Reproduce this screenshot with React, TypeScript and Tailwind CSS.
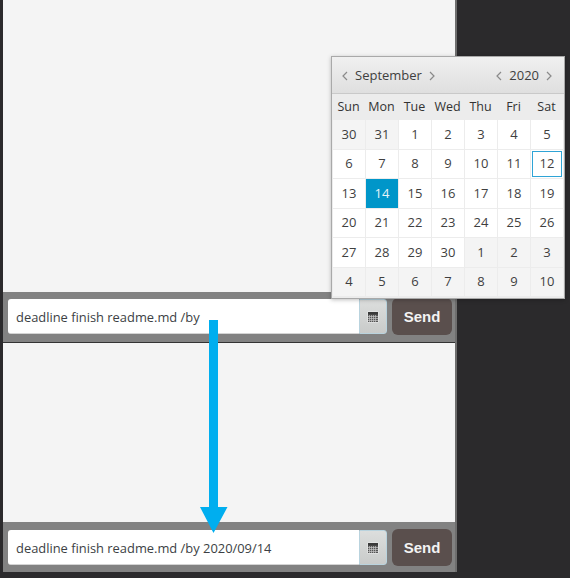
const days: { n: number; muted?: boolean; selected?: boolean; today?: boolean }[] = [
  { n: 30, muted: true }, { n: 31, muted: true }, { n: 1 }, { n: 2 }, { n: 3 }, { n: 4 }, { n: 5 },
  { n: 6 }, { n: 7 }, { n: 8 }, { n: 9 }, { n: 10 }, { n: 11 }, { n: 12, today: true },
  { n: 13 }, { n: 14, selected: true }, { n: 15 }, { n: 16 }, { n: 17 }, { n: 18 }, { n: 19 },
  { n: 20 }, { n: 21 }, { n: 22 }, { n: 23 }, { n: 24 }, { n: 25 }, { n: 26 },
  { n: 27 }, { n: 28 }, { n: 29 }, { n: 30 }, { n: 1, muted: true }, { n: 2, muted: true }, { n: 3, muted: true },
  { n: 4, muted: true }, { n: 5, muted: true }, { n: 6, muted: true }, { n: 7, muted: true }, { n: 8, muted: true }, { n: 9, muted: true }, { n: 10, muted: true },
];
const week = ["Sun", "Mon", "Tue", "Wed", "Thu", "Fri", "Sat"];

function CalIcon() {
  return (
    <svg width="12" height="12" viewBox="0 0 12 12" aria-hidden="true">
      <rect x="0.5" y="0.5" width="11" height="11" fill="#eeeeee" />
      <rect x="1" y="1" width="10" height="10" fill="#555555" />
      <rect x="1" y="1" width="10" height="2.5" fill="#3a3a3a" />
      <path d="M2.5 4v7M4.5 4v7M6.5 4v7M8.5 4v7M1 5.5h10M1 7.5h10M1 9.5h10" stroke="#c4c4c4" strokeWidth="0.7" />
    </svg>
  );
}

function Bar({ text, offset }: { text: string; offset: string }) {
  return (
    <div className={`h-[50px] bg-[#828282] flex items-start pl-[5px] ${offset}`}>
      <div className="mt-[7px] w-[351px] h-[35px] pt-[3px] bg-white rounded-l-[3px] border-b border-[#d4d4d4] flex items-center pl-[8px] text-[12.9px] text-[#3c3f44]">
        {text}
      </div>
      <div className="mt-[7px] w-[28px] h-[35px] rounded-r-[3px] border border-[#b9d3de] bg-gradient-to-b from-[#dcdedd] to-[#c9cbca] flex items-center justify-center">
        <CalIcon />
      </div>
      <div className="ml-[5px] mt-[6px] w-[60px] h-[37px] pt-[1px] rounded-[6px] bg-[#5a4f4d] text-[#f3f3f3] font-bold text-[15px] flex items-center justify-center [font-family:'Liberation_Sans',sans-serif]">
        Send
      </div>
    </div>
  );
}

function Chev({ left }: { left?: boolean }) {
  return (
    <svg width="7" height="10" viewBox="0 0 7 10" aria-hidden="true">
      <path d={left ? "M6 1 2 5l4 4" : "M1 1l4 4-4 4"} fill="none" stroke="#8a8a8a" strokeWidth="1.2" />
    </svg>
  );
}

export default function App() {
  return (
    <div className="relative w-[571px] h-[579px] bg-white overflow-hidden [font-family:'Open_Sans',sans-serif]">
      <div className="w-[570px] h-[578px] bg-[#2b2a2c] pl-[3px]">
        <div className="w-[454px] border-r-2 border-[#6e6e6e]">
          <div className="h-[292px] bg-[#f4f4f4]" />
          <Bar text="deadline finish readme.md /by" offset="" />
          <div className="h-px bg-[#333333]" />
          <div className="h-[179px] bg-[#f4f4f4]" />
          <Bar text="deadline finish readme.md /by 2020/09/14" offset="pt-px" />
        </div>
      </div>

      <div className="absolute left-[331px] top-[56px] w-[234px] h-[243px] border border-[#a9a9a9] bg-[#ececec] shadow-[0_1px_4px_rgba(0,0,0,0.25)] text-[13px] text-[#3f3f3f]">
        <div className="h-[37px] pt-[1px] border-b border-[#c9c9c9] bg-gradient-to-b from-[#f0f0f0] to-[#dfdfdf] flex items-center justify-between pl-[9px] pr-[11px]">
          <div className="flex items-center gap-[7px]">
            <Chev left />
            <span>September</span>
            <Chev />
          </div>
          <div className="flex items-center gap-[7px]">
            <Chev left />
            <span>2020</span>
            <Chev />
          </div>
        </div>
        <div className="grid grid-cols-7 h-[26px] pr-px items-center text-center text-[12.5px] text-[#333333]">
          {week.map((d) => (
            <div key={d}>{d}</div>
          ))}
        </div>
        <div className="grid grid-cols-7 gap-px bg-[#ececec] px-px">
          {days.map((d, i) => (
            <div
              key={i}
              className={`h-[28.5px] flex items-center justify-center ${
                d.selected
                  ? "bg-[#0096c9] text-[#e8f4f8]"
                  : d.muted
                    ? "bg-[#f4f4f4]"
                    : "bg-white"
              } ${d.today ? "outline outline-1 -outline-offset-2 outline-[#2fa4d6]" : ""}`}
            >
              {d.n}
            </div>
          ))}
        </div>
      </div>

      <svg className="absolute left-[198px] top-[318px]" width="32" height="216" viewBox="0 0 32 216" aria-hidden="true">
        <path d="M11 2h9v187h9.5L15.5 215 2 189h9z" fill="#00aeef" />
      </svg>
    </div>
  );
}
